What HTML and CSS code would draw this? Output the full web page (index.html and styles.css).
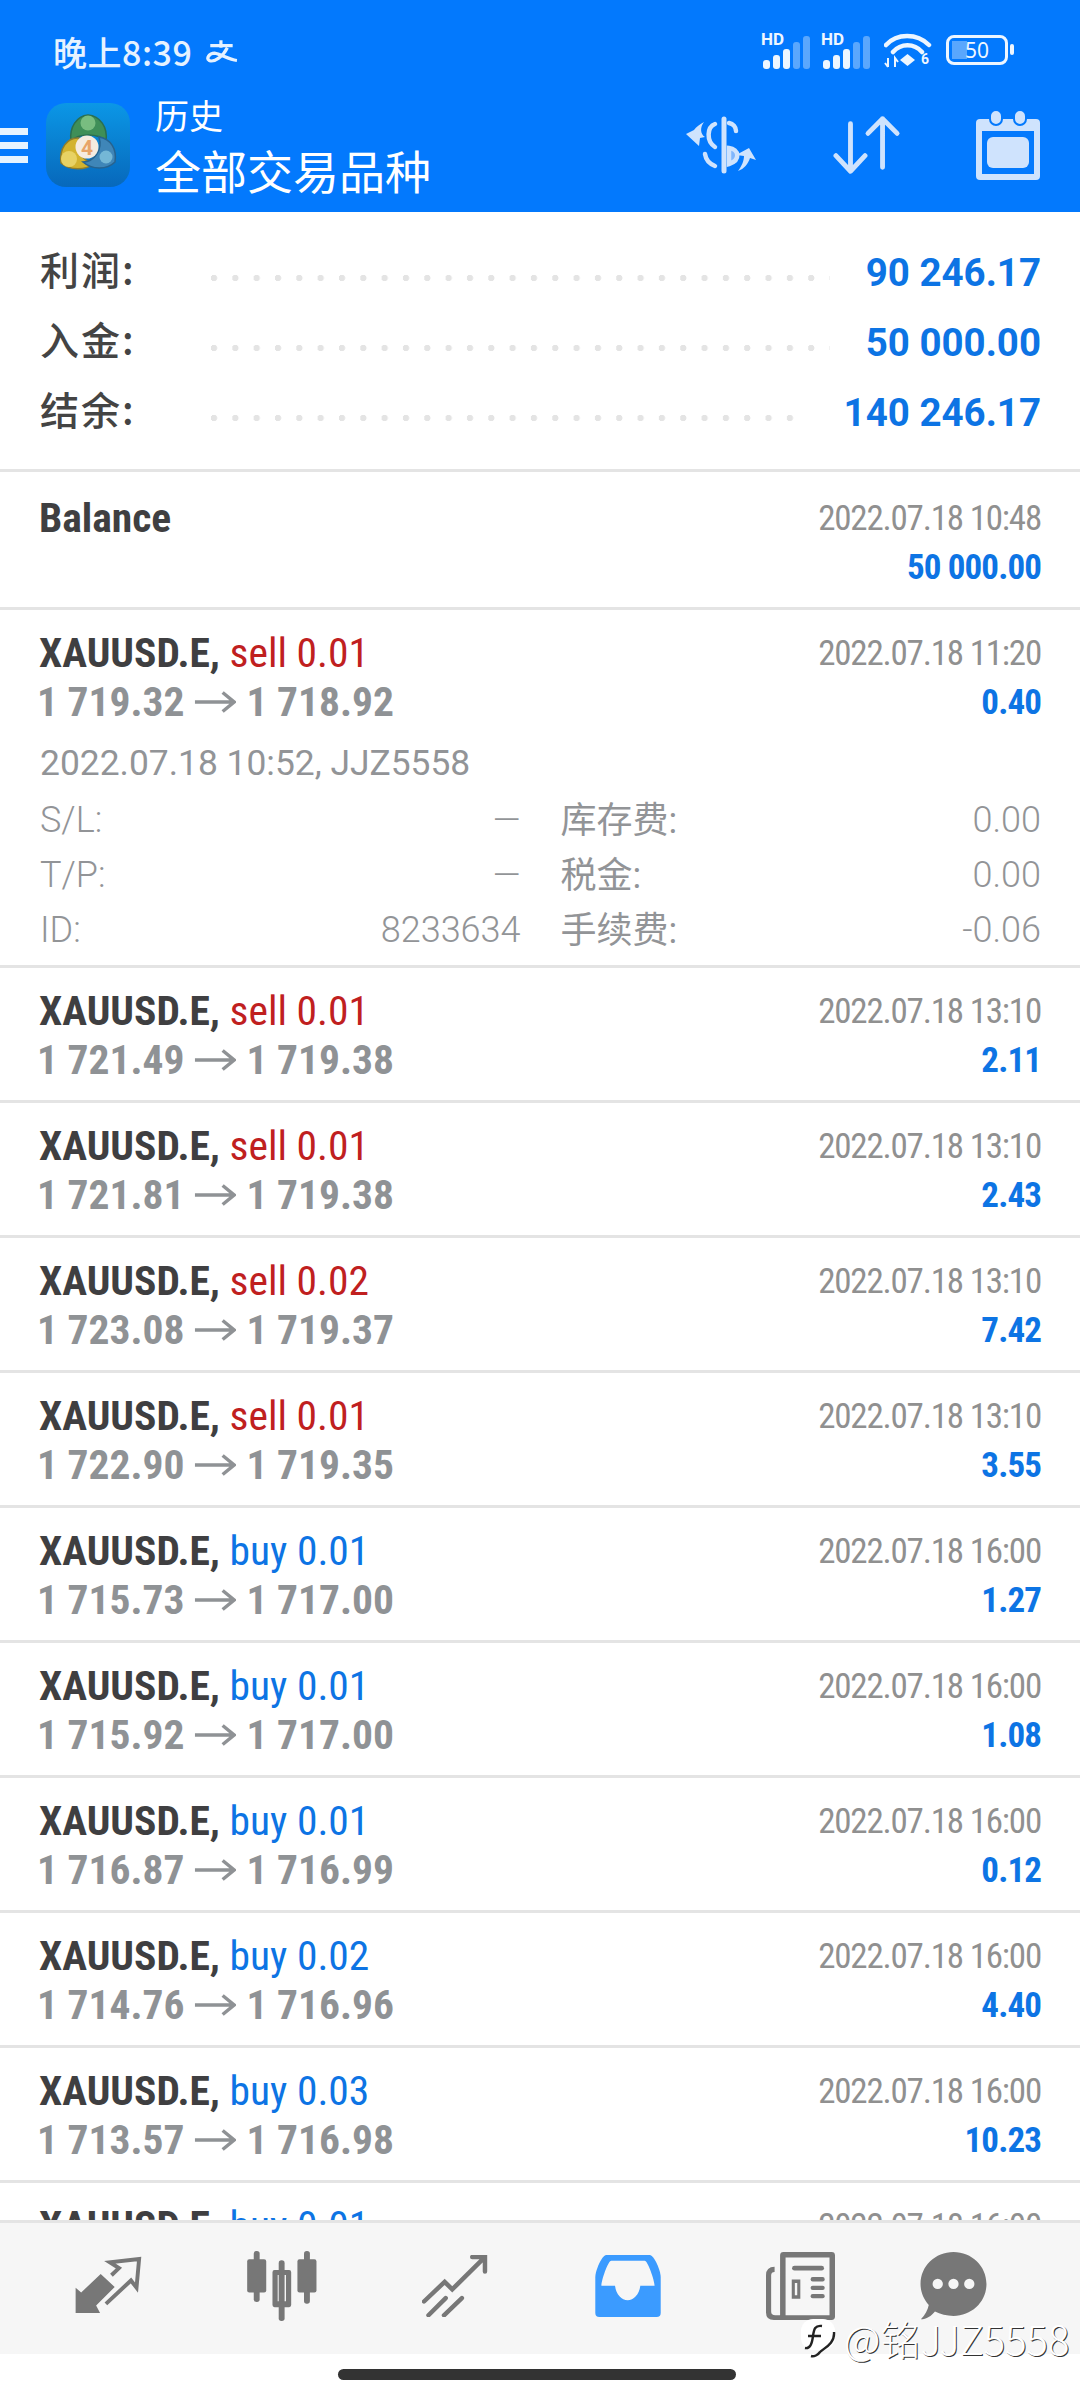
FILE: index.html
```html
<!DOCTYPE html>
<html lang="zh-CN">

<head>
    <meta charset="UTF-8">
    <title>历史</title>
    <link rel="stylesheet" href="styles.css">
</head>

<body>
    <svg class="defs" width="0" height="0">
        <symbol id="arrow-right" viewBox="0 0 44 24">
            <path d="M1 12H41M30 2L42 12L30 22" fill="none" stroke="#8f9295" stroke-width="3.6" />
        </symbol>
    </svg>

    <header class="topbar">
        <div class="status">
            <div class="status-left">
                <span class="clock">晚上8:39</span>
                <svg class="pay-icon" width="32" height="26" viewBox="0 0 30 24">
                    <path d="M14 1V8M4 6H25M20 8C16 16 8 22 3 20C0 18 3 13 8 13C14 14 21 19 29 20" fill="none" stroke="#e6f2ff" stroke-width="3" />
                </svg>
            </div>
            <div class="status-right">
                <div class="signal">
                    <span class="hd">HD</span>
                    <i class="bar b1"></i><i class="bar b2"></i><i class="bar b3"></i><i class="bar b4 dim"></i><i class="bar b5 dim"></i>
                </div>
                <div class="signal">
                    <span class="hd">HD</span>
                    <i class="bar b1"></i><i class="bar b2"></i><i class="bar b3"></i><i class="bar b4 dim"></i><i class="bar b5 dim"></i>
                </div>
                <svg class="wifi" width="48" height="36" viewBox="0 0 48 36">
                    <path d="M2 13C13 1 33 1 45 13M9 20C17 11 30 11 38 20" fill="none" stroke="#eef6ff" stroke-width="4.5" stroke-linecap="round" />
                    <path d="M23.500 22L31 28L23.500 34L16 28Z" fill="#eef6ff" />
                    <path d="M4 26V35M1 31L4 35M11 35V26L14 30" fill="none" stroke="#eef6ff" stroke-width="2" />
                    <text x="37" y="32" class="wifi-six">6</text>
                </svg>
                <div class="battery">
                    <div class="battery-body"><span class="battery-fill"></span><span class="battery-num">50</span></div>
                    <i class="battery-tip"></i>
                </div>
            </div>
        </div>
        <div class="appbar">
            <div class="burger"><i></i><i></i><i></i></div>
            <svg class="app-logo" width="84" height="84" viewBox="0 0 84 84">
                <defs>
                    <linearGradient id="logo-bg" x1="0" y1="0" x2="0" y2="1">
                        <stop offset="0" stop-color="#0b97e6" />
                        <stop offset="1" stop-color="#0768bb" />
                    </linearGradient>
                </defs>
                <rect width="84" height="84" rx="20" fill="url(#logo-bg)" />
                <path d="M25 38C23 24 31 13 42 12C54 13 62 24 60 38C52 30 33 30 25 38Z" fill="#3f8f58" stroke="#2b6f50" stroke-width="1.5" />
                <circle cx="42" cy="20" r="7.500" fill="#78bd80" />
                <path d="M33 35C21 34 13 46 15 60C24 68 40 67 47 61C36 57 29 46 33 35Z" fill="#d3b32f" stroke="#8f7d2c" stroke-width="1.5" />
                <circle cx="23" cy="56" r="8" fill="#e8d264" />
                <path d="M53 34C65 36 71 46 69 59C61 67 46 67 37 59C48 59 57 47 53 34Z" fill="#3f86b8" stroke="#27638f" stroke-width="1.5" />
                <circle cx="60" cy="54" r="6.500" fill="#74b7d6" />
                <circle cx="41" cy="44" r="11.500" fill="#f5ebe0" />
                <text x="41" y="52" class="logo-four">4</text>
            </svg>
            <div class="titles">
                <span class="title-small">历史</span>
                <span class="title-big">全部交易品种</span>
            </div>
            <div class="actions">
                <svg width="72" height="58" viewBox="0 0 72 58">
                    <path d="M38 3V55" fill="none" stroke="#cfe3fd" stroke-width="5" stroke-linecap="round" />
                    <path d="M29 8C21 11 20 25 29 31M19 38C20 45 24 48 29 50M43 7C47 8 50 11 50 15" fill="none" stroke="#cfe3fd" stroke-width="4.500" stroke-linecap="round" />
                    <path d="M43 32C53 33 55 44 43 48Z" fill="#7fb6fd" stroke="#cfe3fd" stroke-width="4.500" />
                    <path d="M18 6C14 8 10 11 8 14L0 18L13 30L14 22L19 21C14 18 14 11 18 6Z" fill="#cfe3fd" />
                    <path d="M52 55C56 50 58 44 58 40L50 39L63 32L70 44L64 42C62 48 58 53 52 55Z" fill="#cfe3fd" />
                </svg>
                <svg width="68" height="60" viewBox="0 0 70 60">
                    <path d="M18 8V56M3 41L18 57L33 41" fill="none" stroke="#cfe3fd" stroke-width="5" stroke-linecap="round" stroke-linejoin="round" />
                    <path d="M51 53V3M36 18L51 3L66 18" fill="none" stroke="#cfe3fd" stroke-width="5" stroke-linecap="round" stroke-linejoin="round" />
                </svg>
                <svg width="64" height="70" viewBox="0 0 64 70">
                    <rect x="0" y="9" width="64" height="61" rx="4" fill="#cfe3fd" />
                    <rect x="6" y="21" width="52" height="43" fill="#0379fd" />
                    <rect x="11" y="27" width="42" height="31" rx="6" fill="#cfe3fd" />
                    <rect x="14" y="0" width="12" height="15" rx="6" fill="#cfe3fd" stroke="#0379fd" stroke-width="2" />
                    <rect x="38" y="0" width="12" height="15" rx="6" fill="#cfe3fd" stroke="#0379fd" stroke-width="2" />
                </svg>
            </div>
        </div>
    </header>

    <main class="content">
        <section class="summary">
            <div class="sum-row">
                <span class="sum-label">利润:</span><span class="sum-dots"></span><span class="sum-value">90 246.17</span>
            </div>
            <div class="sum-row">
                <span class="sum-label">入金:</span><span class="sum-dots"></span><span class="sum-value">50 000.00</span>
            </div>
            <div class="sum-row">
                <span class="sum-label">结余:</span><span class="sum-dots"></span><span class="sum-value">140 246.17</span>
            </div>
        </section>

        <article class="deal deal-balance">
            <div class="line"><span class="name">Balance</span><span class="when">2022.07.18 10:48</span></div>
            <div class="line"><span></span><span class="profit">50 000.00</span></div>
        </article>

        <article class="deal deal-open">
            <div class="line"><span class="name">XAUUSD.E, <b class="sell">sell 0.01</b></span><span class="when">2022.07.18 11:20</span></div>
            <div class="line"><span class="prices">1 719.32<svg class="arrow"><use href="#arrow-right" /></svg>1 718.92</span><span class="profit">0.40</span></div>
            <div class="opened">2022.07.18 10:52, JJZ5558</div>
            <div class="details">
                <div class="cell"><span>S/L:</span><span>—</span></div>
                <div class="cell"><span class="cn">库存费:</span><span>0.00</span></div>
                <div class="cell"><span>T/P:</span><span>—</span></div>
                <div class="cell"><span class="cn">税金:</span><span>0.00</span></div>
                <div class="cell"><span>ID:</span><span>8233634</span></div>
                <div class="cell"><span class="cn">手续费:</span><span>-0.06</span></div>
            </div>
        </article>

        <article class="deal">
            <div class="line"><span class="name">XAUUSD.E, <b class="sell">sell 0.01</b></span><span class="when">2022.07.18 13:10</span></div>
            <div class="line"><span class="prices">1 721.49<svg class="arrow"><use href="#arrow-right" /></svg>1 719.38</span><span class="profit">2.11</span></div>
        </article>
        <article class="deal">
            <div class="line"><span class="name">XAUUSD.E, <b class="sell">sell 0.01</b></span><span class="when">2022.07.18 13:10</span></div>
            <div class="line"><span class="prices">1 721.81<svg class="arrow"><use href="#arrow-right" /></svg>1 719.38</span><span class="profit">2.43</span></div>
        </article>
        <article class="deal">
            <div class="line"><span class="name">XAUUSD.E, <b class="sell">sell 0.02</b></span><span class="when">2022.07.18 13:10</span></div>
            <div class="line"><span class="prices">1 723.08<svg class="arrow"><use href="#arrow-right" /></svg>1 719.37</span><span class="profit">7.42</span></div>
        </article>
        <article class="deal">
            <div class="line"><span class="name">XAUUSD.E, <b class="sell">sell 0.01</b></span><span class="when">2022.07.18 13:10</span></div>
            <div class="line"><span class="prices">1 722.90<svg class="arrow"><use href="#arrow-right" /></svg>1 719.35</span><span class="profit">3.55</span></div>
        </article>
        <article class="deal">
            <div class="line"><span class="name">XAUUSD.E, <b class="buy">buy 0.01</b></span><span class="when">2022.07.18 16:00</span></div>
            <div class="line"><span class="prices">1 715.73<svg class="arrow"><use href="#arrow-right" /></svg>1 717.00</span><span class="profit">1.27</span></div>
        </article>
        <article class="deal">
            <div class="line"><span class="name">XAUUSD.E, <b class="buy">buy 0.01</b></span><span class="when">2022.07.18 16:00</span></div>
            <div class="line"><span class="prices">1 715.92<svg class="arrow"><use href="#arrow-right" /></svg>1 717.00</span><span class="profit">1.08</span></div>
        </article>
        <article class="deal">
            <div class="line"><span class="name">XAUUSD.E, <b class="buy">buy 0.01</b></span><span class="when">2022.07.18 16:00</span></div>
            <div class="line"><span class="prices">1 716.87<svg class="arrow"><use href="#arrow-right" /></svg>1 716.99</span><span class="profit">0.12</span></div>
        </article>
        <article class="deal">
            <div class="line"><span class="name">XAUUSD.E, <b class="buy">buy 0.02</b></span><span class="when">2022.07.18 16:00</span></div>
            <div class="line"><span class="prices">1 714.76<svg class="arrow"><use href="#arrow-right" /></svg>1 716.96</span><span class="profit">4.40</span></div>
        </article>
        <article class="deal">
            <div class="line"><span class="name">XAUUSD.E, <b class="buy">buy 0.03</b></span><span class="when">2022.07.18 16:00</span></div>
            <div class="line"><span class="prices">1 713.57<svg class="arrow"><use href="#arrow-right" /></svg>1 716.98</span><span class="profit">10.23</span></div>
        </article>
        <article class="deal">
            <div class="line"><span class="name">XAUUSD.E, <b class="buy">buy 0.01</b></span><span class="when">2022.07.18 16:00</span></div>
        </article>
    </main>

    <nav class="tabs">
        <svg width="70" height="60" viewBox="40 55 215 180" fill="#777">
            <path d="M45 150L62 165L122 108L165 148L108 205L120 228L45 228Z" />
            <path d="M155 112L178 90L150 72L240 62L232 150L215 128L138 200" fill="none" stroke="#777" stroke-width="12" />
        </svg>
        <svg width="70" height="70" viewBox="716 283 201 202" fill="#777">
            <rect x="735" y="283" width="17" height="147" rx="8" />
            <rect x="716" y="307" width="55" height="96" rx="6" />
            <rect x="807" y="310" width="17" height="175" rx="8" />
            <path fill-rule="evenodd" d="M795 338H837Q843 338 843 344V439Q843 445 837 445H795Q789 445 789 439V344Q789 338 795 338ZM804 352V428H828V352Z" />
            <rect x="880" y="283" width="17" height="152" rx="8" />
            <rect x="861" y="307" width="55" height="96" rx="6" />
        </svg>
        <svg width="66" height="62" viewBox="1225 290 190 180" fill="none" stroke="#777" stroke-width="13" stroke-linecap="round">
            <path d="M1230 425L1290 368L1312 390L1403 300M1370 296H1407V338" />
            <path d="M1243 465L1293 415M1288 465L1340 415" />
        </svg>
        <svg width="66" height="62" viewBox="158 290 192 182">
            <path d="M190 290H318C330 290 350 335 350 355V460Q350 472 338 472H170Q158 472 158 460V355C158 335 178 290 190 290Z" fill="#3b9bff" />
            <path d="M205 307H303C312 307 332 365 332 380H290C288 405 270 423 253 423C236 423 218 405 216 380H176C176 365 195 307 205 307Z" fill="#f6f6f6" />
        </svg>
        <svg width="69" height="68" viewBox="657 282 201 198" fill="#777">
            <path d="M708 282H848Q858 282 858 292V470Q858 480 848 480H680Q657 480 657 458V350Q657 325 682 325V340Q672 340 672 350V455Q672 466 684 466H698V292Q698 282 708 282ZM714 298V466H842V298Z" fill-rule="evenodd" />
            <rect x="733" y="322" width="93" height="14" rx="7" />
            <path fill-rule="evenodd" d="M732 362H757V418H732ZM741 372V408H748V372Z" />
            <rect x="787" y="355" width="41" height="13" rx="6" />
            <rect x="787" y="380" width="41" height="13" rx="6" />
            <rect x="787" y="404" width="41" height="13" rx="6" />
        </svg>
        <svg width="67" height="68" viewBox="1103 282 192 198">
            <path d="M1199 282C1252 282 1295 323 1295 375C1295 427 1252 468 1199 468C1180 468 1160 462 1145 455C1135 468 1120 478 1104 478C1116 466 1124 450 1127 436C1112 420 1103 398 1103 375C1103 323 1146 282 1199 282Z" fill="#777" />
            <circle cx="1153" cy="375" r="15" fill="#f6f6f6" />
            <circle cx="1199" cy="375" r="15" fill="#f6f6f6" />
            <circle cx="1245" cy="375" r="15" fill="#f6f6f6" />
        </svg>
        <div class="watermark">
            <svg width="36" height="40" viewBox="0 0 36 40">
                <rect x="1" y="1" width="34" height="31" rx="12" fill="#fff" />
                <path d="M22 8C15 7 14 11 13 18C12 26 10 31 5 30M8 18H21" fill="none" stroke="#222" stroke-width="2.400" />
                <path d="M34 14C35 26 24 30 20 34C18 37 14 39 11 38" fill="none" stroke="#222" stroke-width="2.400" />
            </svg>
            <span>@铭JJZ5558</span>
        </div>
    </nav>

    <div class="home-area"><i class="home-pill"></i></div>
</body>

</html>
```

FILE: styles.css
```css
* {
    box-sizing: border-box;
}

body {
    margin: 0;
    width: 1080px;
    height: 2400px;
    display: flex;
    flex-direction: column;
    overflow: hidden;
    background-color: #fff;
    font-family: Roboto, "Noto Sans CJK SC", sans-serif;
}

.defs {
    display: block;
    height: 0;
}

/* top blue bar */
.topbar {
    height: 212px;
    flex: none;
    background-color: #0379fd;
    color: #fff;
}

.status {
    height: 89px;
    padding: 30px 66px 0 53px;
    display: flex;
    justify-content: space-between;
    align-items: flex-start;
}

.status-left {
    display: flex;
    align-items: center;
    gap: 14px;
}

.clock {
    font-family: "Noto Sans CJK SC", sans-serif;
    font-size: 34px;
    font-weight: 500;
    letter-spacing: 0.5px;
    line-height: 44px;
    color: #e6f2ff;
}

.status-right {
    display: flex;
    align-items: center;
    gap: 10px;
}

.signal {
    position: relative;
    width: 50px;
    height: 36px;
    margin-top: 3px;
    display: flex;
    align-items: flex-end;
    gap: 3px;
    padding-left: 2px;
}

.signal + .wifi {
    margin-left: 3px;
}

.signal:first-child {
    margin-left: -3px;
}

.hd {
    position: absolute;
    top: -2px;
    left: 0;
    font-size: 17px;
    font-weight: 700;
    line-height: 17px;
    color: #eef6ff;
}

.bar {
    width: 7px;
    border-radius: 3px;
    background-color: #eef6ff;
}

.bar.dim {
    background-color: #5aa7fd;
}

.b1 { height: 9px; }
.b2 { height: 14px; }
.b3 { height: 20px; }
.b4 { height: 27px; }
.b5 { height: 33px; }

.wifi-six {
    font-family: Roboto, sans-serif;
    font-size: 14px;
    font-weight: 700;
    fill: #eef6ff;
}

.logo-four {
    font-family: Roboto, sans-serif;
    font-size: 21px;
    font-weight: 700;
    text-anchor: middle;
    fill: #e8a468;
}

.battery {
    display: flex;
    align-items: center;
    gap: 2px;
    margin-left: 4px;
}

.battery-body {
    position: relative;
    width: 62px;
    height: 30px;
    border: 3px solid #eef6ff;
    border-radius: 8px;
    overflow: hidden;
    text-align: center;
}

.battery-fill {
    position: absolute;
    top: 3px;
    bottom: 3px;
    left: 3px;
    width: 15px;
    background-color: #5aa7fd;
}

.battery-num {
    position: relative;
    font-family: "Noto Sans", sans-serif;
    font-size: 21px;
    line-height: 24px;
    display: block;
    color: #eef6ff;
}

.battery-tip {
    width: 4px;
    height: 11px;
    border-radius: 2px;
    background-color: #eef6ff;
}

.appbar {
    height: 123px;
    padding-bottom: 11px;
    display: flex;
    align-items: center;
}

.burger {
    width: 28px;
    display: flex;
    flex-direction: column;
    gap: 7px;
}

.burger i {
    height: 7px;
    background-color: #e6f3ff;
}

.app-logo {
    margin-left: 18px;
    flex: none;
}

.titles {
    margin-left: 25px;
    display: flex;
    flex-direction: column;
    font-family: "Noto Sans CJK SC", sans-serif;
    font-weight: 400;
}

.title-small {
    font-size: 34px;
    line-height: 48px;
}

.title-big {
    font-size: 46px;
    line-height: 60px;
}

.actions {
    margin-left: auto;
    margin-right: 40px;
    display: flex;
    align-items: center;
    gap: 75px;
}

.content {
    flex: 1;
    min-height: 0;
    overflow: hidden;
}

/* summary block */
.summary {
    height: 260px;
    padding-top: 25px;
    border-bottom: 3px solid #e4e4e4;
}

.sum-row {
    height: 70px;
    padding: 0 39px 0 40px;
    display: flex;
    align-items: center;
}

.sum-label {
    width: 171px;
    margin-bottom: 9px;
    font-family: "Noto Sans CJK SC", sans-serif;
    font-size: 39px;
    font-weight: 500;
    letter-spacing: 2px;
    color: #444;
}

.sum-dots {
    flex: 1;
    height: 6px;
    margin: 12px 36px 0 0;
    background-image: radial-gradient(circle at 3px 3px, #e4e4e4 3px, transparent 3.500px);
    background-size: 21.330px 6px;
    background-repeat: repeat-x;
}

.sum-value {
    font-size: 38.500px;
    font-weight: 700;
    color: #0d74e4;
}

/* deals */
.deal {
    height: 135px;
    padding: 18px 39px 0 40px;
    border-bottom: 3px solid #e4e4e4;
}

.deal-balance {
    height: 138px;
    padding-top: 21px;
}

.deal-open {
    height: 358px;
}

.line {
    height: 49px;
    display: flex;
    justify-content: space-between;
    align-items: center;
}

.name,
.prices {
    font-family: "Roboto Condensed", Roboto, sans-serif;
    font-stretch: condensed;
    font-size: 41.500px;
    font-weight: 700;
    white-space: nowrap;
}

.name {
    margin-left: -1px;
    color: #3f3f41;
}

.sell,
.buy {
    font-weight: 400;
}

.sell {
    color: #c0201f;
}

.buy {
    color: #0d74e4;
}

.prices {
    margin-left: -3px;
    color: #8f9295;
    display: flex;
    align-items: center;
}

.arrow {
    width: 42px;
    height: 24px;
    margin: 0 10px;
}

.when {
    margin-top: 2px;
    font-family: "Roboto Condensed", Roboto, sans-serif;
    font-stretch: condensed;
    font-size: 35px;
    letter-spacing: -1.200px;
    color: #909090;
}

.profit {
    margin-top: 2px;
    font-family: "Roboto Condensed", Roboto, sans-serif;
    font-stretch: condensed;
    font-size: 35px;
    font-weight: 700;
    letter-spacing: -0.900px;
    color: #0d74e4;
}

.opened {
    margin-top: 10px;
    height: 55px;
    line-height: 55px;
    font-size: 35.400px;
    color: #929497;
}

.details {
    margin-top: 1px;
    display: grid;
    grid-template-columns: 1fr 1fr;
    column-gap: 40px;
}

.cell {
    height: 55px;
    display: flex;
    justify-content: space-between;
    align-items: center;
    font-size: 36px;
    font-weight: 300;
    color: #929497;
}

.cn {
    margin-bottom: 5px;
    font-weight: 400;
}

/* bottom tabs */
.tabs {
    position: relative;
    height: 134px;
    flex: none;
    padding: 0 0 6px 22px;
    display: grid;
    grid-template-columns: repeat(5, 173px) 132px;
    justify-items: center;
    align-items: center;
    background-color: #f6f6f6;
    border-top: 3px solid #e4e4e4;
}

.watermark {
    position: absolute;
    top: 94px;
    left: 800px;
    display: flex;
    align-items: center;
    gap: 8px;
    font-family: "Noto Sans CJK SC", sans-serif;
    font-size: 40px;
    font-weight: 300;
    line-height: 42px;
    color: #fff;
    text-shadow: 1px 1px 0 #333;
    white-space: nowrap;
}

.home-area {
    height: 46px;
    flex: none;
    padding: 15px 6px 0 0;
    display: flex;
    justify-content: center;
}

.home-pill {
    width: 398px;
    height: 11px;
    border-radius: 6px;
    background-color: #333;
}
```
